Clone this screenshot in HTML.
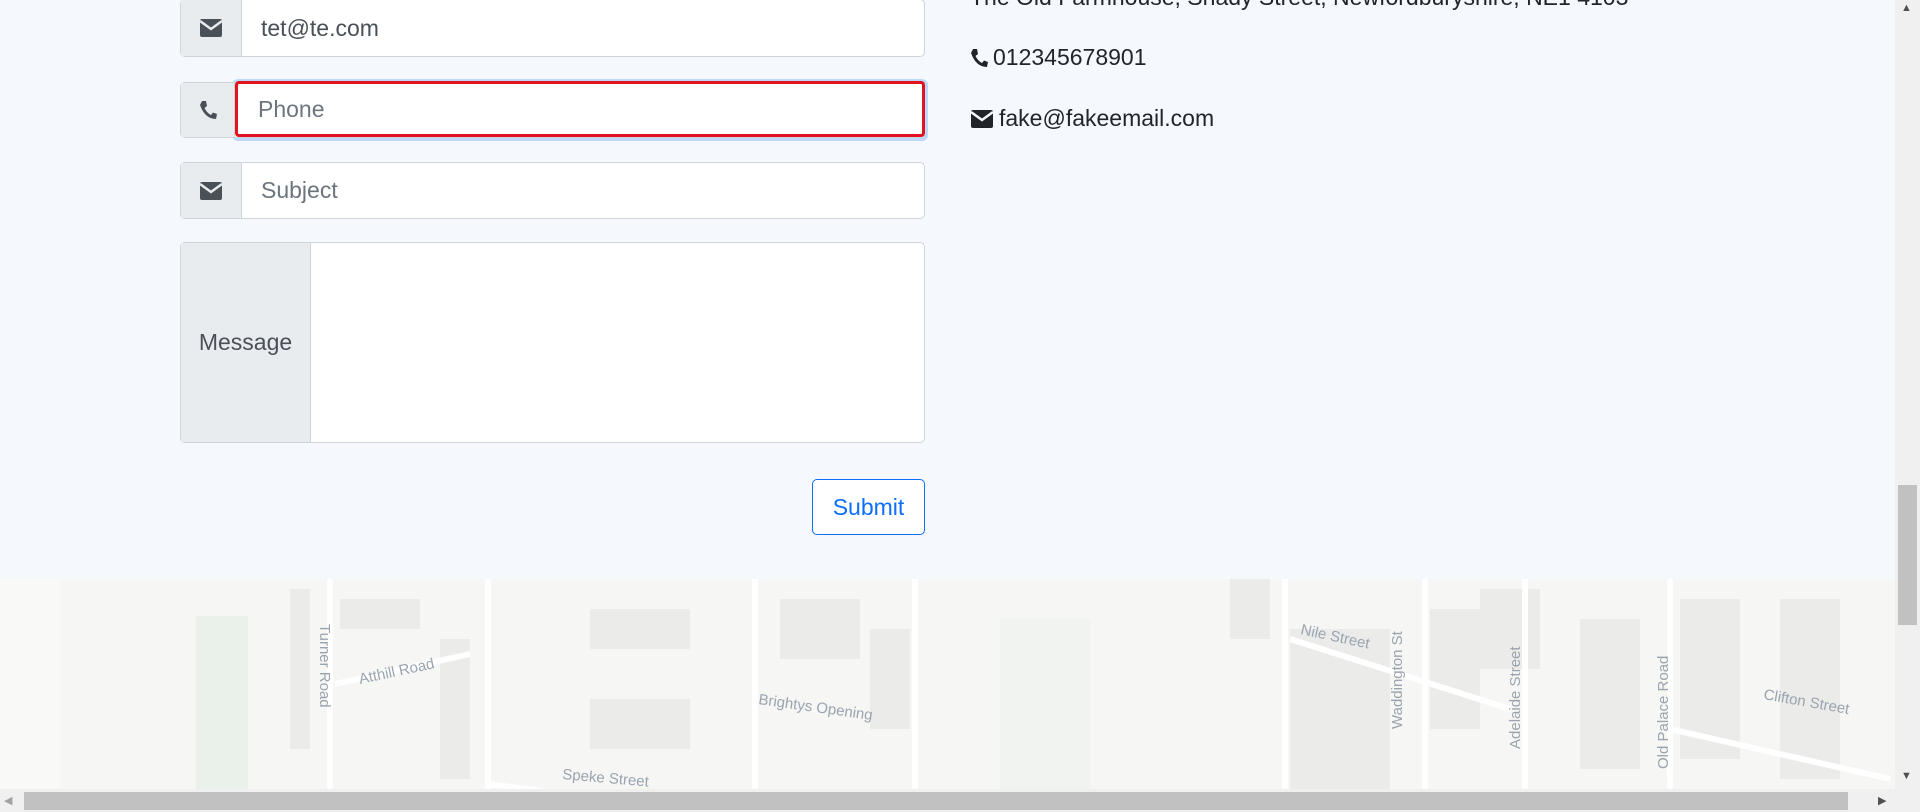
<!DOCTYPE html>
<html><head><meta charset="utf-8"><style>
*{box-sizing:border-box;margin:0;padding:0}
body{width:1920px;height:812px;overflow:hidden;position:relative;background:#f5f9fe;font-family:"Liberation Sans",sans-serif;color:#212529}
.grp{position:absolute;left:180px;width:745px;display:flex;border:1px solid #ced4da;border-radius:5px;background:#fff}
.add{background:#e9ecef;border-right:1px solid #ced4da;display:flex;align-items:center;justify-content:center;color:#495057;font-size:22px}
.inp{flex:1;display:flex;align-items:center;padding-left:19px;font-size:23px;color:#6c757d}
.txt{position:absolute;left:970px;font-size:23px;color:#212529;display:flex;align-items:center;gap:5px}
</style></head><body>
<div class="grp" style="top:-1px;height:58px"><div class="add" style="width:61px"><svg width="24" height="20" viewBox="0 0 24 20"><rect x="1" y="1" width="22" height="18" rx="2" fill="#495057"/><path d="M1 3 L12 11 L23 3" stroke="#e9ecef" stroke-width="2.5" fill="none"/></svg></div><div class="inp" style="color:#495057">tet@te.com</div></div>
<div style="position:absolute;left:232px;top:79px;width:696px;height:62px;border-radius:6px;background:#bcd9fb"></div>
<div class="grp" style="top:82px;height:56px;border-right:none"><div class="add" style="width:54px"><svg width="18" height="20" viewBox="0 0 18 20"><path d="M3 1 L7 1 L8 6 L5.5 8 Q8 13 12 15 L14 12.5 L18 14 L17 19 Q6 19 1 5 Z" fill="#495057"/></svg></div></div>
<div style="position:absolute;left:235px;top:81px;width:690px;height:56px;border:3px solid #e0131f;border-radius:4px;background:#fff;display:flex;align-items:center;padding-left:20px;font-size:23px;color:#6c757d">Phone</div>
<div class="grp" style="top:162px;height:57px"><div class="add" style="width:61px"><svg width="24" height="20" viewBox="0 0 24 20"><rect x="1" y="1" width="22" height="18" rx="2" fill="#495057"/><path d="M1 3 L12 11 L23 3" stroke="#e9ecef" stroke-width="2.5" fill="none"/></svg></div><div class="inp">Subject</div></div>
<div class="grp" style="top:242px;height:201px"><div class="add" style="width:130px;font-size:23px">Message</div><div class="inp"></div></div>
<div style="position:absolute;left:812px;top:479px;width:113px;height:56px;border:1px solid #0d6efd;border-radius:5px;color:#0d6efd;font-size:23px;display:flex;align-items:center;justify-content:center;background:#fff">Submit</div>
<div class="txt" style="top:-16px">The Old Farmhouse, Shady Street, Newfordburyshire, NE1 4103</div>
<div class="txt" style="top:44px"><svg width="18" height="20" viewBox="0 0 18 20"><path d="M3 1 L7 1 L8 6 L5.5 8 Q8 13 12 15 L14 12.5 L18 14 L17 19 Q6 19 1 5 Z" fill="#212529"/></svg>012345678901</div>
<div class="txt" style="top:105px"><svg width="24" height="20" viewBox="0 0 24 20"><rect x="1" y="1" width="22" height="18" rx="2" fill="#212529"/><path d="M1 3 L12 11 L23 3" stroke="#f5f9fe" stroke-width="2.5" fill="none"/></svg>fake@fakeemail.com</div>
<svg style="position:absolute;left:0;top:579px" width="1895" height="210" font-family="Liberation Sans" font-size="15" fill="#9aa4af">
<rect width="1895" height="210" fill="#f6f6f4"/>
<rect x="0" width="60" height="210" fill="#f9f9f8"/>
<rect x="196" y="37" width="52" height="173" fill="#eaf0ea"/>
<rect x="1000" y="40" width="90" height="170" fill="#f0f3f0"/>
<g fill="#ebebea">
<rect x="290" y="10" width="20" height="160"/><rect x="340" y="20" width="80" height="30"/><rect x="440" y="60" width="30" height="140"/><rect x="590" y="30" width="100" height="40"/><rect x="590" y="120" width="100" height="50"/><rect x="780" y="20" width="80" height="60"/><rect x="870" y="50" width="40" height="100"/><rect x="1230" y="0" width="40" height="60"/><rect x="1290" y="50" width="100" height="160"/><rect x="1430" y="30" width="50" height="120"/><rect x="1480" y="10" width="60" height="80"/><rect x="1580" y="40" width="60" height="150"/><rect x="1680" y="20" width="60" height="160"/><rect x="1780" y="20" width="60" height="180"/>
</g>
<g stroke="#fff" stroke-width="6" fill="none">
<path d="M330 0 V210"/><path d="M488 0 V210"/><path d="M335 105 L470 75"/><path d="M488 205 L755 240"/><path d="M755 0 V210"/><path d="M915 0 V210"/><path d="M1285 0 V210"/><path d="M1290 60 L1510 130"/><path d="M1425 0 V210"/><path d="M1525 0 V210"/><path d="M1670 0 V210"/><path d="M1670 150 L1890 200"/>
</g>
<text x="360" y="105" transform="rotate(-12 360 105)">Atthill Road</text>
<text x="758" y="125" transform="rotate(8 758 125)">Brightys Opening</text>
<text x="562" y="200" transform="rotate(5 562 200)">Speke Street</text>
<text x="1300" y="55" transform="rotate(12 1300 55)">Nile Street</text>
<text x="1763" y="120" transform="rotate(10 1763 120)">Clifton Street</text>
<text x="320" y="45" transform="rotate(90 320 45)">Turner Road</text>
<text x="1402" y="150" transform="rotate(-90 1402 150)">Waddington St</text>
<text x="1520" y="170" transform="rotate(-90 1520 170)">Adelaide Street</text>
<text x="1668" y="190" transform="rotate(-90 1668 190)">Old Palace Road</text>
</svg>
<div style="position:absolute;left:0;top:789px;width:1920px;height:23px;background:#f0f0f0"></div>
<div style="position:absolute;left:24px;top:792px;width:1824px;height:18px;background:#c1c1c1"></div>
<div style="position:absolute;left:4px;top:794px;font-size:11px;color:#a3a3a3">◀</div>
<div style="position:absolute;left:1878px;top:794px;font-size:11px;color:#505050">▶</div>
<div style="position:absolute;left:1895px;top:0;width:25px;height:789px;background:#f0f0f0"></div>
<div style="position:absolute;left:1898px;top:485px;width:19px;height:140px;background:#c1c1c1"></div>
<div style="position:absolute;left:1901px;top:2px;font-size:11px;color:#505050">▲</div>
<div style="position:absolute;left:1901px;top:770px;font-size:11px;color:#505050">▼</div>
</body></html>
